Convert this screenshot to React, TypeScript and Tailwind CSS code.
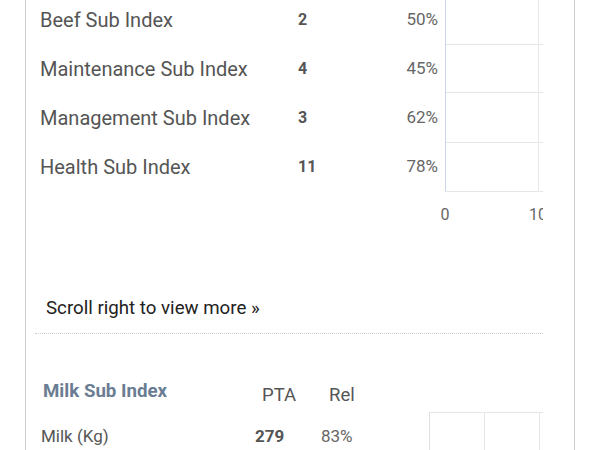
import React from "react";

type Row = { label: string; pta: string; rel: string };

const rows: Row[] = [
  { label: "Beef Sub Index", pta: "2", rel: "50%" },
  { label: "Maintenance Sub Index", pta: "4", rel: "45%" },
  { label: "Management Sub Index", pta: "3", rel: "62%" },
  { label: "Health Sub Index", pta: "11", rel: "78%" },
];

// chart next to the sub index rows (bars are empty in the screenshot)
const IndexChart: React.FC = () => (
  <svg width="105" height="230" className="block shrink-0">
    {[49, 97, 147].map((y) => (
      <line key={y} x1="7" x2="105" y1={y + 0.5} y2={y + 0.5} stroke="#e6e6e6" strokeWidth="1" />
    ))}
    <line x1="100.5" x2="100.5" y1="0" y2="196" stroke="#e6e6e6" strokeWidth="1" />
    <line x1="7" x2="105" y1="196.5" y2="196.5" stroke="#e6e6e6" strokeWidth="1" />
    <line x1="7.5" x2="7.5" y1="0" y2="196" stroke="#ccd6eb" strokeWidth="1" />
    <text x="7" y="225" textAnchor="middle" fontSize="16" fill="#666" fontFamily="Roboto, sans-serif">
      0
    </text>
    <text x="100" y="225" textAnchor="middle" fontSize="16" fill="#666" fontFamily="Roboto, sans-serif">
      10
    </text>
  </svg>
);

const MilkChart: React.FC = () => (
  <svg width="115" height="40" className="block shrink-0">
    <line x1="1" x2="115" y1="0.5" y2="0.5" stroke="#e6e6e6" strokeWidth="1" />
    <line x1="1.5" x2="1.5" y1="0" y2="40" stroke="#e0e0e0" strokeWidth="1" />
    <line x1="56.5" x2="56.5" y1="0" y2="40" stroke="#e6e6e6" strokeWidth="1" />
    <line x1="111.5" x2="111.5" y1="0" y2="40" stroke="#e6e6e6" strokeWidth="1" />
  </svg>
);

export default function App() {
  return (
    <div className="w-[600px] h-[450px] overflow-hidden bg-white font-['Roboto',sans-serif]">
      <div className="flow-root ml-[25px] w-[550px] h-full border-x border-[#cccccc]">
        {/* sub index table + chart */}
        <div className="flex mt-[-5px]">
          <div className="w-[412px] shrink-0">
            {rows.map((r) => (
              <div key={r.label} className="flex items-center h-[49px]">
                <span className="pl-[14px] w-[272px] text-[20px] text-[#555]">{r.label}</span>
                <span className="w-[100px] text-[16px] font-bold text-[#555]">{r.pta}</span>
                <span className="w-[40px] text-right text-[17px] text-[#666]">{r.rel}</span>
              </div>
            ))}
          </div>
          <IndexChart />
        </div>

        <div className="pt-[71px] pl-[20px]">
          <p className="text-[18.7px] leading-[24px] text-[#222]">Scroll right to view more »</p>
        </div>
        <div className="ml-[9px] w-[508px] mt-[13px] border-b border-dotted border-[#cfcfcf]" />

        {/* milk section */}
        <div className="flex items-start mt-[45px] h-[24px]">
          <span className="pl-[17px] w-[236px] text-[18.7px] leading-[24px] font-bold text-[#6a7d93]">
            Milk Sub Index
          </span>
          <span className="mt-[4px] w-[67px] text-[18.5px] leading-[24px] text-[#555]">PTA</span>
          <span className="mt-[4px] text-[18.5px] leading-[24px] text-[#555]">Rel</span>
        </div>
        <div className="flex mt-[9px]">
          <div className="w-[402px] shrink-0 flex items-center h-[50px]">
            <span className="pl-[15px] w-[229px] text-[17px] text-[#555]">Milk (Kg)</span>
            <span className="w-[66px] text-[17px] font-bold text-[#555]">279</span>
            <span className="text-[17px] text-[#666]">83%</span>
          </div>
          <MilkChart />
        </div>
      </div>
    </div>
  );
}
